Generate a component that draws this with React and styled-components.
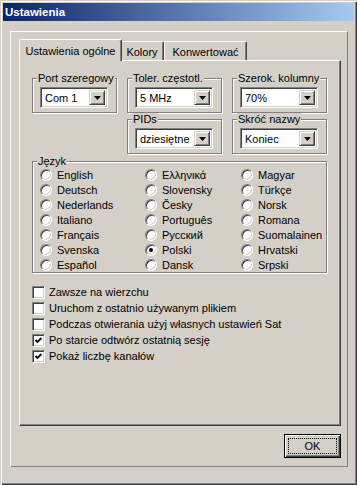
import React from "react";
import styled, { createGlobalStyle } from "styled-components";

const GlobalStyle = createGlobalStyle`
  html, body {
    margin: 0;
    padding: 0;
    background: #d4d0c8;
  }
  body {
    font-family: "Liberation Sans", Arial, sans-serif;
    font-size: 11px;
    color: #000;
  }
`;

const Window = styled.div`
  box-sizing: border-box;
  width: 357px;
  height: 485px;
  padding: 3px;
  background: #d4d0c8;
  box-shadow: inset 1px 1px 0 #d4d0c8, inset 2px 2px 0 #fff,
    inset -1px -1px 0 #404040, inset -2px -2px 0 #808080;
  display: flex;
  flex-direction: column;
`;

const TitleBar = styled.div`
  height: 18px;
  display: flex;
  align-items: center;
  padding-left: 2px;
  background: linear-gradient(to right, #0a246a, #a6caf0);
  color: #fff;
  font-weight: bold;
  font-size: 11.5px;
`;

const Body = styled.div`
  padding: 10px 6px 0 7px;
`;

const Frame = styled.div`
  box-sizing: border-box;
  height: 436px;
  border: 1px solid;
  border-color: #fff #808080 #808080 #fff;
  padding: 7px 6px 8px 8px;
  display: flex;
  flex-direction: column;
`;

const TabStrip = styled.div`
  height: 21px;
  display: flex;
  align-items: flex-end;
  position: relative;
  z-index: 1;
`;

const Tab = styled.div`
  box-sizing: border-box;
  width: ${(p) => p.$width}px;
  height: ${(p) => (p.$active ? 22 : 19)}px;
  margin-bottom: ${(p) => (p.$active ? -1 : 0)}px;
  margin-right: ${(p) => (p.$active ? -2 : 0)}px;
  padding-top: ${(p) => (p.$active ? 0 : 1)}px;
  position: relative;
  z-index: ${(p) => (p.$active ? 2 : 1)};
  background: #d4d0c8;
  border-top: 1px solid #fff;
  border-left: 1px solid #fff;
  border-right: 1px solid #404040;
  border-radius: 2px 2px 0 0;
  box-shadow: inset -1px 0 0 #808080;
  display: flex;
  align-items: center;
  justify-content: center;
  white-space: nowrap;
`;

const Panel = styled.div`
  flex: 1;
  box-sizing: border-box;
  border: 1px solid;
  border-color: #fff #404040 #404040 #fff;
  box-shadow: inset -1px -1px 0 #808080;
  padding: 11px 12px 0 12px;
`;

const GroupGrid = styled.div`
  display: grid;
  grid-template-columns: 85px 95px 95px;
  column-gap: 10px;
`;

const Group = styled.fieldset`
  margin: 0;
  min-width: 0;
  padding: ${(p) => p.$pad || "2px 8px 4px 7px"};
  border: 1px solid #808080;
  box-shadow: 1px 1px 0 #fff, inset 1px 1px 0 #fff;
  grid-column: ${(p) => p.$col || "auto"};
`;

const Legend = styled.legend`
  padding: 0 1px;
  margin-left: -3px;
  line-height: ${(p) => p.$lh || 13}px;
  background: #d4d0c8;
  white-space: nowrap;
`;

const Combo = styled.div`
  box-sizing: border-box;
  height: 21px;
  display: flex;
  padding: 2px;
  background: #fff;
  border: 1px solid;
  border-color: #808080 #fff #fff #808080;
  box-shadow: inset 1px 1px 0 #404040, inset -1px -1px 0 #d4d0c8;
`;

const ComboText = styled.div`
  flex: 1;
  display: flex;
  align-items: center;
  padding-left: 2px;
  white-space: nowrap;
  overflow: hidden;
`;

const DropButton = styled.div`
  box-sizing: border-box;
  width: 16px;
  background: #d4d0c8;
  border: 1px solid;
  border-color: #d4d0c8 #404040 #404040 #d4d0c8;
  box-shadow: inset 1px 1px 0 #fff, inset -1px -1px 0 #808080;
  display: flex;
  align-items: center;
  justify-content: center;
`;

const LangGroup = styled(Group)`
  margin-top: 1px;
  width: 295px;
  box-sizing: border-box;
`;

const RadioGrid = styled.div`
  display: grid;
  grid-template-columns: 105px 96px 1fr;
  grid-template-rows: repeat(7, 15px);
  grid-auto-flow: column;
`;

const Option = styled.label`
  display: flex;
  align-items: center;
  gap: ${(p) => p.$gap || 5}px;
  white-space: nowrap;
`;

const RadioCircle = styled.span`
  box-sizing: border-box;
  width: 12px;
  height: 12px;
  border-radius: 50%;
  border: 1px solid;
  border-color: #808080 #fff #fff #808080;
  box-shadow: inset 1px 1px 0 #404040, inset -1px -1px 0 #d4d0c8;
  background: #fff;
  display: flex;
  align-items: center;
  justify-content: center;
  flex-shrink: 0;
`;

const Dot = styled.span`
  width: 4px;
  height: 4px;
  border-radius: 50%;
  background: #000;
`;

const CheckList = styled.div`
  margin-top: 11px;
  display: grid;
  grid-auto-rows: 16px;
`;

const CheckBox = styled.span`
  box-sizing: border-box;
  width: 13px;
  height: 13px;
  border: 1px solid;
  border-color: #808080 #fff #fff #808080;
  box-shadow: inset 1px 1px 0 #404040, inset -1px -1px 0 #d4d0c8;
  background: #fff;
  display: flex;
  align-items: center;
  justify-content: center;
  flex-shrink: 0;
`;

const Footer = styled.div`
  display: flex;
  justify-content: flex-end;
  padding-top: 8px;
`;

const OkButton = styled.div`
  box-sizing: border-box;
  width: 57px;
  height: 24px;
  padding: 3px;
  border: 1px solid #000;
  box-shadow: inset 1px 1px 0 #fff, inset -1px -1px 0 #404040,
    inset -2px -2px 0 #808080;
  display: flex;
`;

const FocusRect = styled.div`
  flex: 1;
  border: 1px dotted #000;
  display: flex;
  align-items: center;
  justify-content: center;
`;

const Arrow = () => (
  <svg width="7" height="4" viewBox="0 0 7 4">
    <polygon points="0,0 7,0 3.5,4" fill="#000" />
  </svg>
);

const Check = () => (
  <svg width="7" height="7" viewBox="0 0 7 7">
    <polyline points="0.5,3 2.5,5 6.5,1" fill="none" stroke="#000" strokeWidth="1.8" />
  </svg>
);

const ComboBox = ({ value }) => (
  <Combo>
    <ComboText>{value}</ComboText>
    <DropButton>
      <Arrow />
    </DropButton>
  </Combo>
);

const languages = [
  "English", "Deutsch", "Nederlands", "Italiano", "Français", "Svenska", "Español",
  "Ελληνικά", "Slovensky", "Česky", "Português", "Русский", "Polski", "Dansk",
  "Magyar", "Türkçe", "Norsk", "Romana", "Suomalainen", "Hrvatski", "Srpski",
];

const options = [
  { label: "Zawsze na wierzchu", checked: false },
  { label: "Uruchom z ostatnio używanym plikiem", checked: false },
  { label: "Podczas otwierania użyj własnych ustawień Sat", checked: false },
  { label: "Po starcie odtwórz ostatnią sesję", checked: true },
  { label: "Pokaż liczbę kanałów", checked: true },
];

export default function App() {
  return (
    <>
      <GlobalStyle />
      <Window>
        <TitleBar>Ustawienia</TitleBar>
        <Body>
          <Frame>
            <TabStrip>
              <Tab $active $width={103}>Ustawienia ogólne</Tab>
              <Tab $width={44}>Kolory</Tab>
              <Tab $width={83}>Konwertować</Tab>
            </TabStrip>
            <Panel>
              <GroupGrid>
                <Group>
                  <Legend>Port szeregowy</Legend>
                  <ComboBox value="Com 1" />
                </Group>
                <Group>
                  <Legend>Toler. częstotl.</Legend>
                  <ComboBox value="5 MHz" />
                </Group>
                <Group>
                  <Legend>Szerok. kolumny</Legend>
                  <ComboBox value="70%" />
                </Group>
                <Group $col="2">
                  <Legend>PIDs</Legend>
                  <ComboBox value="dziesiętne" />
                </Group>
                <Group>
                  <Legend>Skróć nazwy</Legend>
                  <ComboBox value="Koniec" />
                </Group>
              </GroupGrid>
              <LangGroup $pad="0 4px 0 7px">
                <Legend $lh={12}>Język</Legend>
                <RadioGrid>
                  {languages.map((lang) => (
                    <Option key={lang}>
                      <RadioCircle>{lang === "Polski" && <Dot />}</RadioCircle>
                      {lang}
                    </Option>
                  ))}
                </RadioGrid>
              </LangGroup>
              <CheckList>
                {options.map((o) => (
                  <Option key={o.label} $gap={4}>
                    <CheckBox>{o.checked && <Check />}</CheckBox>
                    {o.label}
                  </Option>
                ))}
              </CheckList>
            </Panel>
            <Footer>
              <OkButton>
                <FocusRect>OK</FocusRect>
              </OkButton>
            </Footer>
          </Frame>
        </Body>
      </Window>
    </>
  );
}
